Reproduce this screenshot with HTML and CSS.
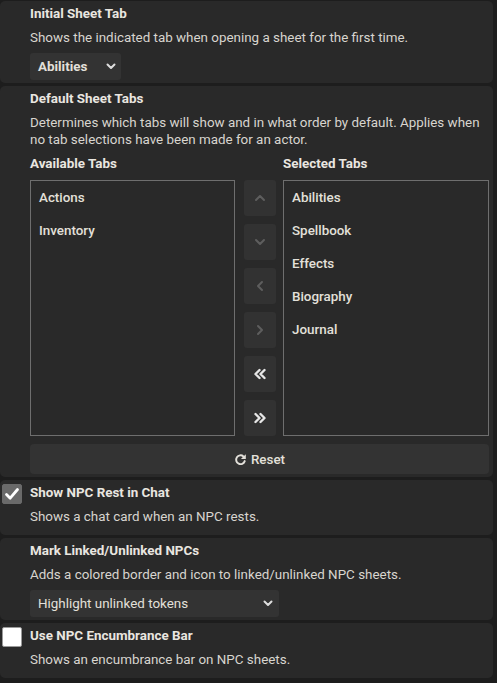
FILE: index.html
```html
<!DOCTYPE html>
<html lang="en">
<head>
<meta charset="utf-8">
<title>Settings</title>
<link rel="stylesheet" href="styles.css">
</head>
<body>
<div class="settings">
  <section class="card">
    <div class="check-col"></div>
    <div class="content">
      <h4 class="title">Initial Sheet Tab</h4>
      <p class="notes">Shows the indicated tab when opening a sheet for the first time.</p>
      <div class="select select-short">
        <span class="select-value strong">Abilities</span>
        <svg class="chev" width="10" height="7" viewBox="0 0 10 7"><path d="M1.5 1.5 L5 5 L8.5 1.5" fill="none" stroke="currentColor" stroke-width="2" stroke-linecap="round" stroke-linejoin="round"/></svg>
      </div>
    </div>
  </section>

  <section class="card">
    <div class="check-col"></div>
    <div class="content">
      <h4 class="title">Default Sheet Tabs</h4>
      <p class="notes">Determines which tabs will show and in what order by default. Applies when no tab selections have been made for an actor.</p>
      <div class="tabs-grid">
        <h5 class="col-head">Available Tabs</h5>
        <div></div>
        <h5 class="col-head">Selected Tabs</h5>
        <ul class="list">
          <li>Actions</li>
          <li>Inventory</li>
        </ul>
        <div class="controls">
          <button class="ctl disabled" type="button"><svg width="12" height="8" viewBox="0 0 12 8"><path d="M2 6 L6 2 L10 6" fill="none" stroke="currentColor" stroke-width="2" stroke-linecap="round" stroke-linejoin="round"/></svg></button>
          <button class="ctl disabled" type="button"><svg width="12" height="8" viewBox="0 0 12 8"><path d="M2 2 L6 6 L10 2" fill="none" stroke="currentColor" stroke-width="2" stroke-linecap="round" stroke-linejoin="round"/></svg></button>
          <button class="ctl disabled" type="button"><svg width="8" height="12" viewBox="0 0 8 12"><path d="M6 2 L2 6 L6 10" fill="none" stroke="currentColor" stroke-width="2" stroke-linecap="round" stroke-linejoin="round"/></svg></button>
          <button class="ctl disabled" type="button"><svg width="8" height="12" viewBox="0 0 8 12"><path d="M2 2 L6 6 L2 10" fill="none" stroke="currentColor" stroke-width="2" stroke-linecap="round" stroke-linejoin="round"/></svg></button>
          <button class="ctl" type="button"><svg width="14" height="12" viewBox="0 0 14 12"><path d="M6.5 2 L2.5 6 L6.5 10 M11.5 2 L7.5 6 L11.5 10" fill="none" stroke="currentColor" stroke-width="2.4" stroke-linecap="round" stroke-linejoin="round"/></svg></button>
          <button class="ctl" type="button"><svg width="14" height="12" viewBox="0 0 14 12"><path d="M2.5 2 L6.5 6 L2.5 10 M7.5 2 L11.5 6 L7.5 10" fill="none" stroke="currentColor" stroke-width="2.4" stroke-linecap="round" stroke-linejoin="round"/></svg></button>
        </div>
        <ul class="list">
          <li>Abilities</li>
          <li>Spellbook</li>
          <li>Effects</li>
          <li>Biography</li>
          <li>Journal</li>
        </ul>
      </div>
      <button class="reset" type="button">
        <svg width="13" height="13" viewBox="0 0 16 16"><path d="M11.6 4.2 A5.4 5.4 0 1 0 13.2 10" fill="none" stroke="currentColor" stroke-width="2.4" stroke-linecap="round"/><path d="M14.5 1.5 L14.5 7.5 L8.5 7.5 Z" fill="currentColor"/></svg>
        <span>Reset</span>
      </button>
    </div>
  </section>

  <section class="card card-tall">
    <div class="check-col"><span class="checkbox checked"><svg width="16" height="16" viewBox="0 0 16 16"><path d="M2.5 8.5 L6.2 12.2 L13.5 3.5" fill="none" stroke="#ffffff" stroke-width="2.8" stroke-linecap="round" stroke-linejoin="round"/></svg></span></div>
    <div class="content">
      <h4 class="title">Show NPC Rest in Chat</h4>
      <p class="notes">Shows a chat card when an NPC rests.</p>
    </div>
  </section>

  <section class="card">
    <div class="check-col"></div>
    <div class="content">
      <h4 class="title">Mark Linked/Unlinked NPCs</h4>
      <p class="notes">Adds a colored border and icon to linked/unlinked NPC sheets.</p>
      <div class="select select-long">
        <span class="select-value">Highlight unlinked tokens</span>
        <svg class="chev" width="10" height="7" viewBox="0 0 10 7"><path d="M1.5 1.5 L5 5 L8.5 1.5" fill="none" stroke="currentColor" stroke-width="2" stroke-linecap="round" stroke-linejoin="round"/></svg>
      </div>
    </div>
  </section>

  <section class="card card-tall">
    <div class="check-col"><span class="checkbox"></span></div>
    <div class="content">
      <h4 class="title">Use NPC Encumbrance Bar</h4>
      <p class="notes">Shows an encumbrance bar on NPC sheets.</p>
    </div>
  </section>
</div>
</body>
</html>
```

FILE: styles.css
```css
* { box-sizing: border-box; }

html, body {
  margin: 0;
  padding: 0;
  background: #1d1d1d;
}

body {
  font-family: Roboto, "Liberation Sans", sans-serif;
  font-size: 13.4px;
  line-height: 17px;
  color: #d9d6d0;
}

.settings {
  width: 493px;
  padding-top: 1px;
  display: flex;
  flex-direction: column;
  gap: 3px;
}

.card {
  display: flex;
  gap: 8px;
  padding: 4px 4px 3px 2px;
  background: #292929;
  border-radius: 5px;
}

.card-tall { padding-bottom: 10px; }

.check-col {
  width: 20px;
  flex: none;
}

.content {
  flex: 1;
  display: flex;
  flex-direction: column;
  gap: 7px;
  min-width: 0;
}

.title {
  margin: 0;
  font-size: 13.4px;
  font-weight: 700;
  color: #e9e6e0;
}

.notes {
  margin: 0;
  color: #d8d5cf;
}

.select {
  height: 27px;
  display: flex;
  align-items: center;
  justify-content: space-between;
  padding: 0 8px 0 8px;
  background: #333333;
  border-radius: 3px;
  color: #e3e0da;
}

.select-short { width: 91px; padding-right: 5px; }
.select-long { width: 249px; padding-right: 6px; }

.strong { font-weight: 700; }

.chev { color: #dedede; }

.tabs-grid {
  display: grid;
  grid-template-columns: 205px 48px 206px;
  row-gap: 8px;
}

.col-head {
  margin: 0;
  font-size: 13.4px;
  font-weight: 700;
  color: #e9e6e0;
}

.list {
  margin: 0;
  padding: 0;
  list-style: none;
  height: 256px;
  border: 1px solid #6e6e6e;
}

.list li {
  height: 33px;
  line-height: 33px;
  padding-left: 8px;
  font-weight: 500;
  color: #e3e0da;
}

.controls {
  display: flex;
  flex-direction: column;
  gap: 8px;
  padding-left: 9px;
}

.ctl {
  width: 32px;
  height: 36px;
  padding: 0;
  border: none;
  border-radius: 3px;
  background: #323232;
  color: #e6e6e6;
  display: flex;
  align-items: center;
  justify-content: center;
}

.ctl.disabled { color: #5e5e5e; }

.reset {
  margin-top: 1px;
  height: 30px;
  padding: 0;
  border: none;
  border-radius: 4px;
  background: #333333;
  color: #e3e0da;
  font-family: inherit;
  font-size: 13.4px;
  font-weight: 500;
  display: flex;
  align-items: center;
  justify-content: center;
  gap: 4px;
}

.checkbox {
  width: 20px;
  height: 20px;
  display: flex;
  align-items: center;
  justify-content: center;
  background: #ffffff;
  border: 1px solid #9a9a9a;
  border-radius: 2px;
}

.checkbox.checked {
  background: #6a6a6a;
  border-color: #6a6a6a;
}
```
